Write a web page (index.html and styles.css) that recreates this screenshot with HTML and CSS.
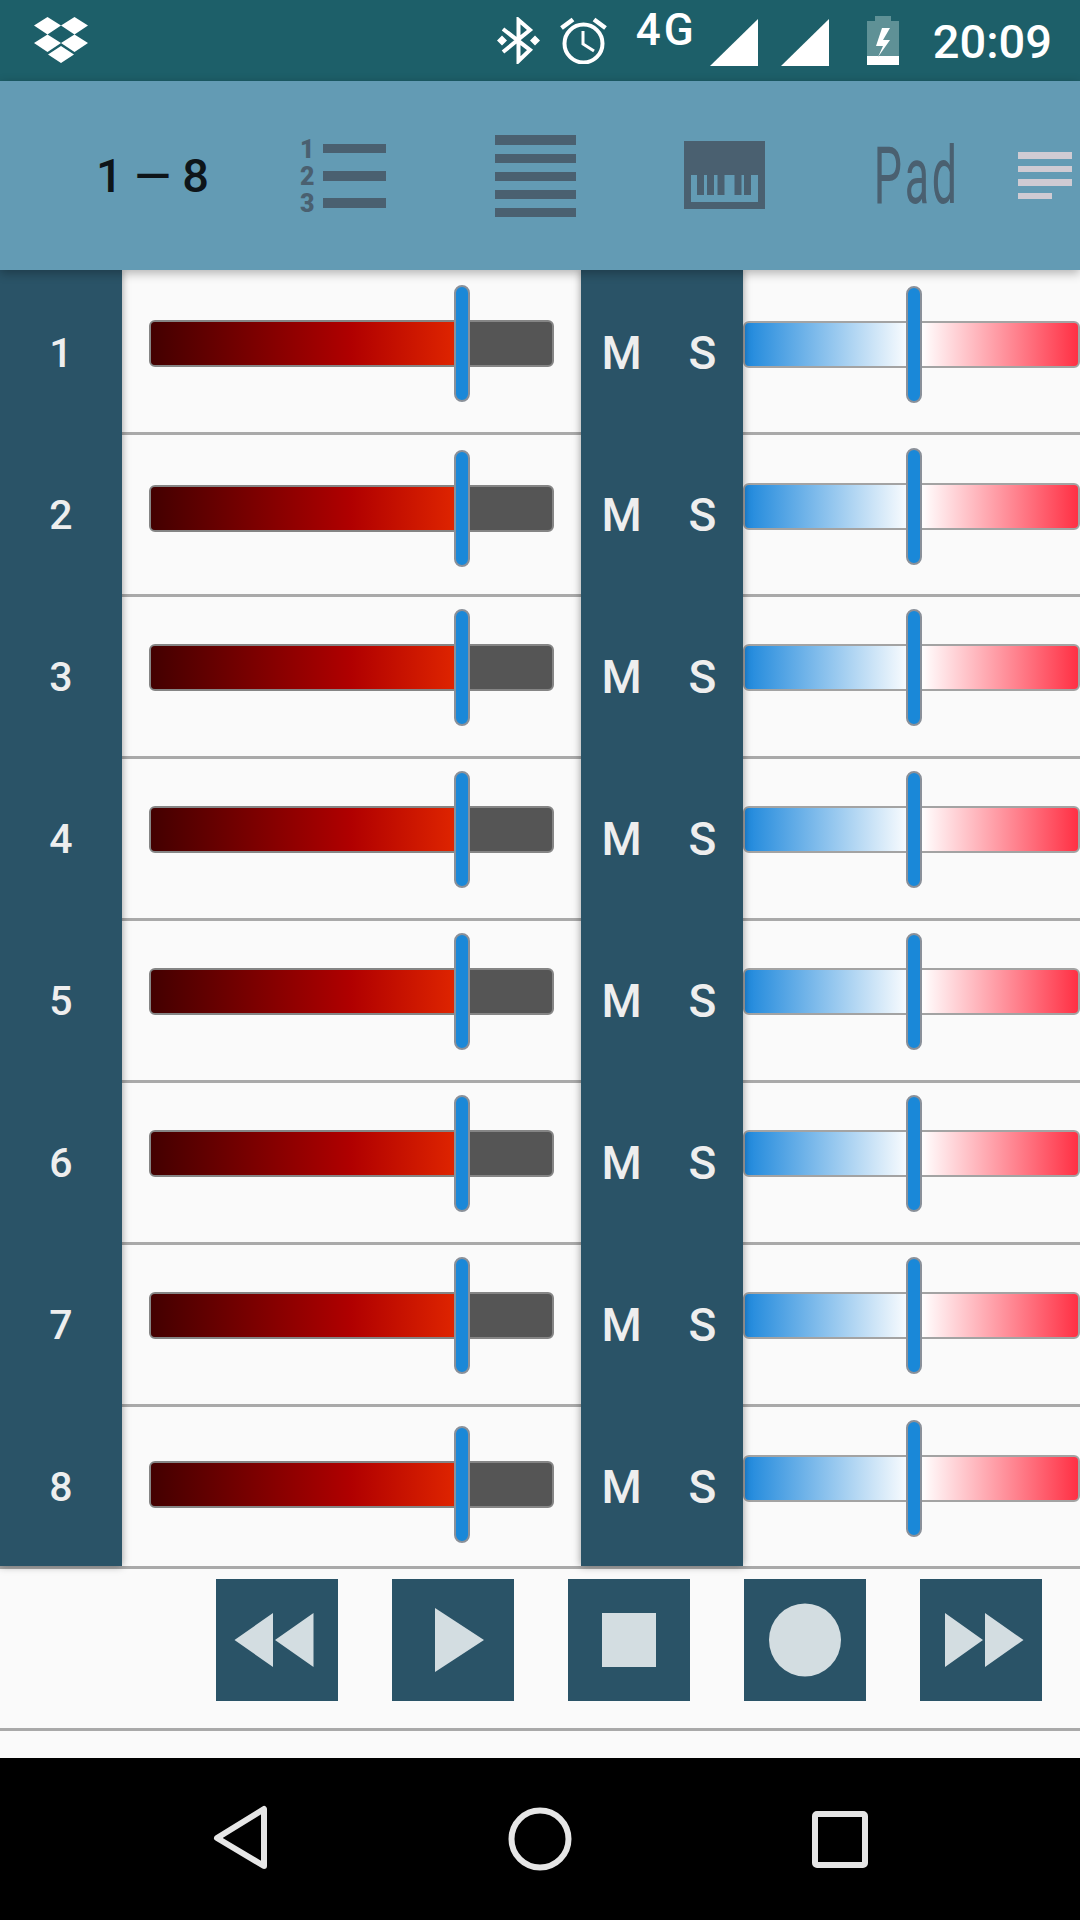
FILE: index.html
```html
<!DOCTYPE html>
<html lang="en">
<head>
    <meta charset="UTF-8">
    <meta name="viewport" content="width=device-width, initial-scale=1.0">
    <title>Mixer</title>
    <link rel="stylesheet" href="styles.css">
</head>
<body>

    <div class="status-bar">
        <svg class="status-dropbox" width="54" height="46" viewBox="0 0 54 46">
            <path fill="#fff" d="M13.500 0L27 8.500 13.500 17.500 0 8.500ZM40.500 0L54 8.500 40.500 17.500 27 8.500ZM13.500 17.500L27 26 13.500 35 0 26ZM40.500 17.500L54 26 40.500 35 27 26ZM27 29L40 37.500 27 46 14 37.500Z"/>
        </svg>
        <div class="status-right">
            <svg width="43" height="47" viewBox="0 0 43 47">
                <path fill="none" stroke="#fff" stroke-width="4" d="M6 12L33 33 21.500 44V3L33 13 6 35"/>
                <path fill="#fff" d="M5 18.500L10 23.500 5 28.500 0 23.500ZM38 18.500L43 23.500 38 28.500 33 23.500Z"/>
            </svg>
            <svg class="status-alarm" width="47" height="47" viewBox="0 0 47 47">
                <g fill="none" stroke="#fff">
                    <circle cx="23.500" cy="26.500" r="19" stroke-width="4"/>
                    <path stroke-width="3" d="M23 14V27L34 34"/>
                    <path stroke-width="4.500" d="M1.500 11L13 2.500M45.500 11L34 2.500"/>
                </g>
            </svg>
            <span class="status-net">4G</span>
            <svg class="status-signal" width="48" height="47" viewBox="0 0 48 47"><path fill="#fff" d="M48 0V47H0Z"/></svg>
            <svg class="status-signal-2" width="48" height="47" viewBox="0 0 48 47"><path fill="#fff" d="M48 0V47H0Z"/></svg>
            <svg class="status-battery" width="32" height="49" viewBox="0 0 32 49">
                <path fill="#5f9196" d="M8 0H24V5H32V40H0V5H8Z"/>
                <path fill="#fff" d="M0 40H32V49H0ZM23 12H15L9 30H16L11 41 23 24H16Z"/>
            </svg>
            <span class="status-time">20:09</span>
        </div>
    </div>

    <div class="toolbar">
        <div class="bank-label">1 — 8</div>
        <svg class="tool-numbered" width="86" height="88" viewBox="0 -8 86 88">
            <g class="tool-digits">
                <text x="0" y="18">1</text>
                <text x="0" y="45">2</text>
                <text x="0" y="72">3</text>
            </g>
            <path fill="#4a6070" d="M23 4H86V13H23ZM23 31H86V41H23ZM23 58H86V68H23Z"/>
        </svg>
        <svg class="tool-lines" width="81" height="82" viewBox="0 0 81 82">
            <path fill="#4a6070" d="M0 0H81V10H0ZM0 19H81V28H0ZM0 37H81V46H0ZM0 55H81V64H0ZM0 73H81V82H0Z"/>
        </svg>
        <svg class="tool-piano" width="81" height="68" viewBox="0 0 81 68">
            <path fill="#4a6070" fill-rule="evenodd" d="M0 0H81V68H0ZM7 34V61H74V34H67V54H60V34H57.500V54H50.500V34H40.500V54H33.500V34H30V54H23V34H20V54H13V34Z"/>
        </svg>
        <div class="tool-pad"><span>Pad</span></div>
        <svg class="tool-menu" width="54" height="47" viewBox="0 0 54 47">
            <path fill="#cfcbd3" d="M0 0H54V7H0ZM0 14H54V20H0ZM0 27H54V34H0ZM0 41H34V47H0Z"/>
        </svg>
    </div>

    <div class="mixer">
        <div class="col-num">
            <div class="num-cell">1</div>
            <div class="num-cell">2</div>
            <div class="num-cell">3</div>
            <div class="num-cell">4</div>
            <div class="num-cell">5</div>
            <div class="num-cell">6</div>
            <div class="num-cell">7</div>
            <div class="num-cell">8</div>
        </div>
        <div class="col-volume">
            <div class="slider-cell"><div class="volume-track"><div class="volume-fill"></div><div class="thumb"></div></div></div>
            <div class="slider-cell"><div class="volume-track"><div class="volume-fill"></div><div class="thumb"></div></div></div>
            <div class="slider-cell"><div class="volume-track"><div class="volume-fill"></div><div class="thumb"></div></div></div>
            <div class="slider-cell"><div class="volume-track"><div class="volume-fill"></div><div class="thumb"></div></div></div>
            <div class="slider-cell"><div class="volume-track"><div class="volume-fill"></div><div class="thumb"></div></div></div>
            <div class="slider-cell"><div class="volume-track"><div class="volume-fill"></div><div class="thumb"></div></div></div>
            <div class="slider-cell"><div class="volume-track"><div class="volume-fill"></div><div class="thumb"></div></div></div>
            <div class="slider-cell"><div class="volume-track"><div class="volume-fill"></div><div class="thumb"></div></div></div>
        </div>
        <div class="col-ms">
            <div class="ms-cell"><span>M</span><span>S</span></div>
            <div class="ms-cell"><span>M</span><span>S</span></div>
            <div class="ms-cell"><span>M</span><span>S</span></div>
            <div class="ms-cell"><span>M</span><span>S</span></div>
            <div class="ms-cell"><span>M</span><span>S</span></div>
            <div class="ms-cell"><span>M</span><span>S</span></div>
            <div class="ms-cell"><span>M</span><span>S</span></div>
            <div class="ms-cell"><span>M</span><span>S</span></div>
        </div>
        <div class="col-pan">
            <div class="slider-cell"><div class="pan-track"><div class="thumb"></div></div></div>
            <div class="slider-cell"><div class="pan-track"><div class="thumb"></div></div></div>
            <div class="slider-cell"><div class="pan-track"><div class="thumb"></div></div></div>
            <div class="slider-cell"><div class="pan-track"><div class="thumb"></div></div></div>
            <div class="slider-cell"><div class="pan-track"><div class="thumb"></div></div></div>
            <div class="slider-cell"><div class="pan-track"><div class="thumb"></div></div></div>
            <div class="slider-cell"><div class="pan-track"><div class="thumb"></div></div></div>
            <div class="slider-cell"><div class="pan-track"><div class="thumb"></div></div></div>
        </div>
    </div>

    <div class="transport">
        <div class="transport-btn">
            <svg width="122" height="122" viewBox="0 0 122 122"><path fill="#d3dde1" d="M18.500 61L57 34V88ZM59 61L97.500 34V88Z"/></svg>
        </div>
        <div class="transport-btn">
            <svg width="122" height="122" viewBox="0 0 122 122"><path fill="#d3dde1" d="M43 29L92 61 43 93Z"/></svg>
        </div>
        <div class="transport-btn">
            <svg width="122" height="122" viewBox="0 0 122 122"><path fill="#d3dde1" d="M34 34H88V88H34Z"/></svg>
        </div>
        <div class="transport-btn">
            <svg width="122" height="122" viewBox="0 0 122 122"><ellipse fill="#d3dde1" cx="61" cy="61" rx="36" ry="36.500"/></svg>
        </div>
        <div class="transport-btn">
            <svg width="122" height="122" viewBox="0 0 122 122"><path fill="#d3dde1" d="M25 34L63 61 25 88ZM65 34L103.500 61 65 88Z"/></svg>
        </div>
    </div>
    <div class="bottom-gap"></div>

    <div class="nav-bar">
        <svg class="nav-back" width="56" height="66" viewBox="0 0 56 66">
            <path fill="none" stroke="#e6e6e6" stroke-width="6" stroke-linejoin="round" d="M51 4V61L4 33Z"/>
        </svg>
        <svg class="nav-home" width="64" height="64" viewBox="0 0 64 64">
            <circle fill="none" stroke="#e6e6e6" stroke-width="6" cx="32" cy="32" r="28.500"/>
        </svg>
        <svg class="nav-recent" width="56" height="57" viewBox="0 0 56 57">
            <rect fill="none" stroke="#e6e6e6" stroke-width="6" x="3" y="3" width="50" height="51" rx="2"/>
        </svg>
    </div>

</body>
</html>
```
FILE: styles.css
```css
* {
    box-sizing: border-box;
}
body {
    margin: 0;
    width: 1080px;
    height: 1920px;
    overflow: hidden;
    background-color: #FAFAFA;
    font-family: Roboto, sans-serif;
    color: #EEEEEE;
}
svg {
    display: block;
    flex: none;
}

/* status bar */
.status-bar {
    height: 81px;
    background-color: #1D5F69;
    display: flex;
    align-items: flex-start;
    justify-content: space-between;
    padding: 17px 28px 0 34px;
    color: #FFFFFF;
}
.status-right {
    display: flex;
    align-items: flex-start;
}
.status-alarm {
    margin-left: 20px;
}
.status-net {
    margin-left: 29px;
    margin-top: -12px;
    font-size: 44px;
    line-height: 50px;
    font-weight: 500;
    letter-spacing: 3px;
}
.status-signal {
    margin-left: 13px;
    margin-top: 2px;
}
.status-signal-2 {
    margin-left: 23px;
    margin-top: 2px;
}
.status-battery {
    margin-left: 38px;
    margin-top: -1px;
}
.status-time {
    margin-left: 34px;
    font-size: 47px;
    line-height: 50px;
    font-weight: 500;
}

/* toolbar */
.toolbar {
    position: relative;
    z-index: 3;
    height: 189px;
    background-color: #639BB4;
    box-shadow: 0 3px 10px rgba(0, 0, 0, 0.3);
    display: flex;
    align-items: center;
}
.bank-label {
    margin-left: 96px;
    width: 204px;
    font-size: 47px;
    color: #0E1519;
    font-weight: 500;
}
.tool-digits text {
    font-family: Roboto, sans-serif;
    font-weight: 900;
    font-size: 25px;
    fill: #4A6070;
}
.tool-lines {
    margin-left: 109px;
}
.tool-piano {
    margin-left: 108px;
    margin-top: -1px;
}
.tool-pad {
    margin-left: 111px;
    width: 82px;
    height: 84px;
    display: flex;
    justify-content: center;
    line-height: 84px;
    font-size: 80px;
    letter-spacing: 5px;
    color: #4A6070;
}
.tool-pad span {
    transform: scaleX(0.56);
}
.tool-menu {
    margin-left: 60px;
}

/* mixer: four columns, one cell per channel */
.mixer {
    display: flex;
    height: 1296px;
}
.col-num, .col-ms {
    position: relative;
    z-index: 2;
    flex: none;
    background-color: #2A5367;
    box-shadow: 0 0 8px rgba(0, 0, 0, 0.4);
}
.col-num {
    width: 122px;
}
.col-ms {
    width: 162px;
}
.col-volume {
    width: 459px;
    flex: none;
}
.col-pan {
    flex: 1;
}
.num-cell, .ms-cell, .slider-cell {
    height: 162px;
}
.num-cell {
    display: flex;
    align-items: center;
    justify-content: center;
    font-size: 41px;
    font-weight: 500;
    padding-top: 3px;
}
.ms-cell {
    display: flex;
    align-items: center;
    font-size: 46px;
    font-weight: 500;
    padding-top: 3px;
}
.ms-cell span {
    width: 81px;
    text-align: center;
}
.slider-cell {
    border-top: 3px solid #A9A9A9;
    padding-top: 47px;
}
.slider-cell:first-child {
    border-top: none;
    padding-top: 50px;
}
.col-volume .slider-cell {
    padding-left: 27px;
    padding-right: 27px;
}
.col-volume .slider-cell:nth-child(2) {
    padding-top: 50px;
}
.col-volume .slider-cell:nth-child(8) {
    padding-top: 54px;
}
.col-pan .slider-cell:first-child {
    padding-top: 51px;
}
.col-pan .slider-cell:nth-child(2), .col-pan .slider-cell:nth-child(8) {
    padding-top: 48px;
}
.volume-track, .pan-track {
    position: relative;
    height: 47px;
    border-radius: 6px;
    border: 2px solid #858585;
}
.volume-track {
    background-color: #555555;
}
.volume-fill {
    width: 303px;
    height: 100%;
    border-radius: 4px 0 0 4px;
    background: linear-gradient(to right, #430000 0%, #B00000 66%, #DE2400 100%);
}
.pan-track {
    background: linear-gradient(to right, #1E88DC 0%, #FFFFFF 50%, #FFFFFF 53%, #FF3044 100%);
    border-color: #A3A3A3;
}
.thumb {
    position: absolute;
    top: -37px;
    left: 303px;
    width: 16px;
    height: 117px;
    border-radius: 8px;
    border: 2px solid #8A9099;
    background-color: #1A88D8;
}
.pan-track .thumb {
    left: 161px;
}

/* transport */
.transport {
    height: 165px;
    border-top: 3px solid #A9A9A9;
    border-bottom: 3px solid #A9A9A9;
    display: flex;
    justify-content: flex-end;
    gap: 54px;
    padding-top: 10px;
    padding-right: 38px;
}
.transport-btn {
    width: 122px;
    height: 122px;
    background-color: #2A5367;
}
.bottom-gap {
    height: 27px;
}

/* android nav */
.nav-bar {
    position: relative;
    height: 162px;
    background-color: #000000;
}
.nav-bar svg {
    position: absolute;
}
.nav-back {
    left: 213px;
    top: 47px;
}
.nav-home {
    left: 508px;
    top: 49px;
}
.nav-recent {
    left: 812px;
    top: 53px;
}
```
